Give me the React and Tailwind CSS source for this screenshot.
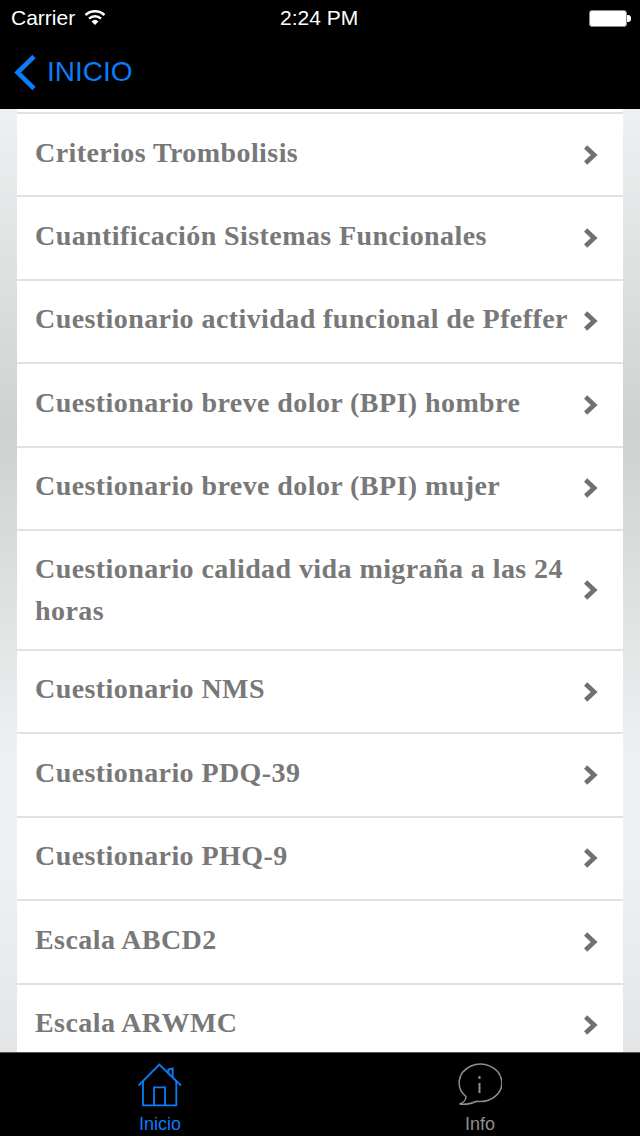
import React from "react";

const items = [
  "Criterios Trombolisis",
  "Cuantificación Sistemas Funcionales",
  "Cuestionario actividad funcional de Pfeffer",
  "Cuestionario breve dolor (BPI) hombre",
  "Cuestionario breve dolor (BPI) mujer",
  "Cuestionario calidad vida migraña a las 24 horas",
  "Cuestionario NMS",
  "Cuestionario PDQ-39",
  "Cuestionario PHQ-9",
  "Escala ABCD2",
  "Escala ARWMC",
];

function Chevron() {
  return (
    <svg width="16" height="22" viewBox="0 0 16 22" className="shrink-0">
      <path d="M2.6 3 L11.2 11 L2.6 19" fill="none" stroke="#707070" strokeWidth="4.6" />
    </svg>
  );
}

export default function App() {
  return (
    <div className="w-[640px] h-[1136px] flex flex-col overflow-hidden bg-black font-['Liberation_Sans',sans-serif]">
      <header className="h-[109px] shrink-0 bg-black flex flex-col">
        <div className="h-[36px] relative text-white flex items-center px-[11px] text-[21px]">
          <span>Carrier</span>
          <svg width="22" height="16" viewBox="0 0 22 16" className="ml-[9px] mb-[3px]">
            <path d="M1.5 6 A14 14 0 0 1 20.5 6" fill="none" stroke="#fff" strokeWidth="2.4" />
            <path d="M5 9.6 A9 9 0 0 1 17 9.6" fill="none" stroke="#fff" strokeWidth="2.4" />
            <path d="M7.6 12.4 A5 5 0 0 1 14.4 12.4 L11 16 Z" fill="#fff" />
          </svg>
          <span className="absolute left-[280px] top-[4px] text-[21px] font-medium leading-[28px]">2:24 PM</span>
          <div className="ml-auto mr-[-2px] flex items-center">
            <div className="w-[38px] h-[17px] rounded-[3px] border border-[#8a8a8a] bg-white" />
            <div className="w-[4px] h-[7px] rounded-r-[3px] bg-white" />
          </div>
        </div>
        <div className="flex items-center pl-[14px] h-[73px] pb-[1px] text-[#0a7dfa]">
          <svg width="24" height="37" viewBox="0 0 24 37">
            <path d="M20 2.5 L3.6 18.5 L20 34.5" fill="none" stroke="#0a7dfa" strokeWidth="4.6" />
          </svg>
          <span className="ml-[9px] text-[28px] leading-none">INICIO</span>
        </div>
      </header>

      <main className="flex-1 min-h-0 overflow-hidden px-[17px] bg-[linear-gradient(180deg,#eff0f1_0%,#cfd0d0_34%,#eeeff0_68%,#eeeff0_82%,#e4e5e7_100%)]">
        <div className="bg-white pt-[3px]">
          <ul className="border-t-2 border-[#e2e2e2]">
            {items.map((t) => (
              <li
                key={t}
                className="min-h-[83.4px] pl-[18px] pr-[24px] pt-[17.5px] pb-[17.5px] flex items-center justify-between border-b-2 border-[#e2e2e2]"
              >
                <span className="self-start font-['Liberation_Serif',serif] font-bold text-[28px] leading-[41.5px] text-[#787878] tracking-[0.42px] max-w-[535px]">
                  {t}
                </span>
                <Chevron />
              </li>
            ))}
          </ul>
        </div>
      </main>

      <footer className="h-[84px] shrink-0 bg-black border-t border-[#555] flex">
        <div className="w-[320px] flex flex-col items-center pt-[10px] text-[#0a7dfa]">
          <svg width="44" height="44" viewBox="0 0 44 44">
            <g fill="none" stroke="#0a7dfa" strokeWidth="1.8">
              <path d="M0.5 22.5 L21.3 1.5 L43 22.5" />
              <path d="M30.3 10.5 V6.5 L34.7 5.5 V14.5" />
              <path d="M5 18 V42.3 H38.3 V18" />
              <path d="M16 42.3 V24.3 H27 V42.3" />
            </g>
          </svg>
          <span className="text-[18px] leading-[20px] mt-[7px]">Inicio</span>
        </div>
        <div className="w-[320px] flex flex-col items-center pt-[10px] text-[#8e8e8e]">
          <svg width="44" height="44" viewBox="0 0 44 44">
            <path d="M18.7 38.2 A21.3 18.7 0 1 0 8 33.5 C8 37 5 40 1.5 41 C7 42 12 41 18.7 38.2 Z" fill="none" stroke="#8e8e8e" strokeWidth="1.5" />
            <rect x="20.5" y="20" width="2" height="10" fill="#8e8e8e" />
            <rect x="20.5" y="13" width="2" height="3" fill="#8e8e8e" />
          </svg>
          <span className="text-[18px] leading-[20px] mt-[7px]">Info</span>
        </div>
      </footer>
    </div>
  );
}
